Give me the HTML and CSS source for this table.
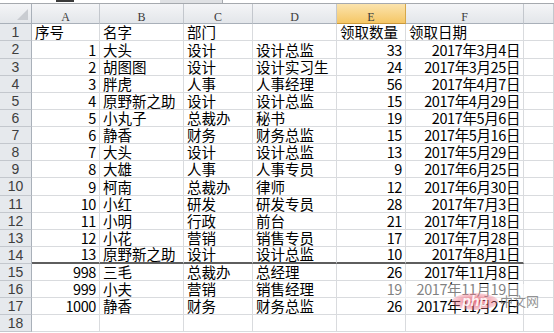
FILE: index.html
```html
<!DOCTYPE html>
<html lang="zh">
<head>
<meta charset="utf-8">
<link rel="stylesheet" href="styles.css">
</head>
<body>
<div class="top"><span class="namebox"></span><span class="split"></span></div>
<div class="sheet">
  <div class="corner"></div><div class="ch">A</div><div class="ch">B</div><div class="ch">C</div><div class="ch">D</div><div class="ch sel">E</div><div class="ch">F</div><div class="ch"></div>

  <div class="rh">1</div><div class="c">序号</div><div class="c">名字</div><div class="c">部门</div><div class="c"></div><div class="c">领取数量</div><div class="c">领取日期</div><div class="c"></div>
  <div class="rh">2</div><div class="c n">1</div><div class="c">大头</div><div class="c">设计</div><div class="c">设计总监</div><div class="c n">33</div><div class="c n">2017年3月4日</div><div class="c"></div>
  <div class="rh">3</div><div class="c n">2</div><div class="c">胡图图</div><div class="c">设计</div><div class="c">设计实习生</div><div class="c n">24</div><div class="c n">2017年3月25日</div><div class="c"></div>
  <div class="rh">4</div><div class="c n">3</div><div class="c">胖虎</div><div class="c">人事</div><div class="c">人事经理</div><div class="c n">56</div><div class="c n">2017年4月7日</div><div class="c"></div>
  <div class="rh">5</div><div class="c n">4</div><div class="c">原野新之助</div><div class="c">设计</div><div class="c">设计总监</div><div class="c n">15</div><div class="c n">2017年4月29日</div><div class="c"></div>
  <div class="rh">6</div><div class="c n">5</div><div class="c">小丸子</div><div class="c">总裁办</div><div class="c">秘书</div><div class="c n">19</div><div class="c n">2017年5月6日</div><div class="c"></div>
  <div class="rh">7</div><div class="c n">6</div><div class="c">静香</div><div class="c">财务</div><div class="c">财务总监</div><div class="c n">15</div><div class="c n">2017年5月16日</div><div class="c"></div>
  <div class="rh">8</div><div class="c n">7</div><div class="c">大头</div><div class="c">设计</div><div class="c">设计总监</div><div class="c n">13</div><div class="c n">2017年5月29日</div><div class="c"></div>
  <div class="rh">9</div><div class="c n">8</div><div class="c">大雄</div><div class="c">人事</div><div class="c">人事专员</div><div class="c n">9</div><div class="c n">2017年6月25日</div><div class="c"></div>
  <div class="rh">10</div><div class="c n">9</div><div class="c">柯南</div><div class="c">总裁办</div><div class="c">律师</div><div class="c n">12</div><div class="c n">2017年6月30日</div><div class="c"></div>
  <div class="rh">11</div><div class="c n">10</div><div class="c">小红</div><div class="c">研发</div><div class="c">研发专员</div><div class="c n">28</div><div class="c n">2017年7月3日</div><div class="c"></div>
  <div class="rh">12</div><div class="c n">11</div><div class="c">小明</div><div class="c">行政</div><div class="c">前台</div><div class="c n">21</div><div class="c n">2017年7月18日</div><div class="c"></div>
  <div class="rh">13</div><div class="c n">12</div><div class="c">小花</div><div class="c">营销</div><div class="c">销售专员</div><div class="c n">17</div><div class="c n">2017年7月28日</div><div class="c"></div>
  <div class="rh">14</div><div class="c n brk">13</div><div class="c brk">原野新之助</div><div class="c brk">设计</div><div class="c brk">设计总监</div><div class="c n brk">10</div><div class="c n brk">2017年8月1日</div><div class="c"></div>
  <div class="rh">15</div><div class="c n">998</div><div class="c">三毛</div><div class="c">总裁办</div><div class="c">总经理</div><div class="c n">26</div><div class="c n">2017年11月8日</div><div class="c"></div>
  <div class="rh">16</div><div class="c n">999</div><div class="c">小夫</div><div class="c">营销</div><div class="c">销售经理</div><div class="c n">19</div><div class="c n">2017年11月19日</div><div class="c"></div>
  <div class="rh">17</div><div class="c n">1000</div><div class="c">静香</div><div class="c">财务</div><div class="c">财务总监</div><div class="c n">26</div><div class="c n">2017年11月27日</div><div class="c"></div>
  <div class="rh">18</div><div class="c"></div><div class="c"></div><div class="c"></div><div class="c"></div><div class="c"></div><div class="c"></div><div class="c"></div>
</div>
<div class="fade"></div>
<div class="wm"><span class="blob">php</span><span class="cn">中文网</span></div>
</body>
</html>
```

FILE: styles.css
```css
html, body {
  margin: 0;
  padding: 0;
  background: #fff;
  width: 554px;
  height: 333px;
  overflow: hidden;
}

.top {
  height: 3px;
  border-bottom: 1px solid #a5a9ae;
  overflow: hidden;
  display: flex;
}

.namebox {
  display: block;
  height: 2px;
  width: 18px;
  margin-left: 56px;
  margin-right: 86px;
  background: #3a3a3a;
}

.split {
  width: 62px;
  background: #dfe1e4;
  border-right: 1px solid #a5a9ae;
}

.sheet {
  display: grid;
  grid-template-columns: 32px 68px 84px 69px 84px 69px 118px 1fr;
  grid-template-rows: 20px 17px 18px repeat(7, 17px) 18px repeat(8, 17px);
  font-family: "Noto Sans CJK SC", "Noto Sans", sans-serif;
  font-size: 14.5px;
  color: #000;
}

.corner, .ch {
  box-sizing: border-box;
  background: linear-gradient(#f4f5f7, #e3e6ea);
  border-right: 1px solid #c3c7cd;
  border-bottom: 1px solid #a9b0b9;
}

.corner {
  position: relative;
  border-right-color: #a9b0b9;
}

.corner::after {
  content: "";
  position: absolute;
  right: 3px;
  bottom: 3px;
  width: 0;
  height: 0;
  border-left: 11px solid transparent;
  border-bottom: 11px solid #c9ccd1;
}

.ch {
  font-family: "Liberation Serif", serif;
  font-size: 12px;
  color: #3b3b3b;
  text-align: center;
  line-height: 12px;
  padding-top: 7px;
}

.ch.sel {
  background: linear-gradient(#fbe3ad, #f5c766);
  border-right-color: #d6a84a;
  border-bottom-color: #c9983a;
}

.rh {
  box-sizing: border-box;
  background: #e6e9ed;
  border-right: 1px solid #a9b0b9;
  border-bottom: 1px solid #c3c7cd;
  font-family: "Liberation Sans", sans-serif;
  font-size: 14px;
  color: #3e3e3e;
  text-align: center;
  line-height: 16px;
}

.c {
  box-sizing: border-box;
  border-right: 1px solid #d9dbde;
  border-bottom: 1px solid #d9dbde;
  line-height: 16px;
  padding: 0 2px 0 3px;
  white-space: nowrap;
  display: flex;
  align-items: flex-end;
}

.c.n {
  justify-content: flex-end;
  padding: 0 3px 0 2px;
  letter-spacing: -0.4px;
}

.c.brk {
  border-bottom: 2px solid #5e5e5e;
}

.fade {
  position: absolute;
  left: 380px;
  top: 284px;
  width: 145px;
  height: 15px;
  background: rgba(255, 255, 255, 0.5);
}

.wm {
  position: absolute;
  left: 452px;
  top: 292px;
  display: flex;
  align-items: center;
  height: 18px;
}

.blob {
  display: block;
  width: 46px;
  height: 17px;
  border-radius: 50%;
  background: radial-gradient(ellipse at center, rgba(226, 70, 90, 0.75), rgba(240, 130, 150, 0.35) 70%, rgba(255, 255, 255, 0) 100%);
  color: rgba(255, 255, 255, 0.9);
  font-family: "Liberation Sans", sans-serif;
  font-style: italic;
  font-weight: bold;
  font-size: 14px;
  line-height: 17px;
  text-align: center;
}

.cn {
  font-family: "Noto Sans CJK SC", sans-serif;
  font-size: 13px;
  color: rgba(110, 110, 110, 0.75);
  margin-left: 2px;
  line-height: 18px;
}
```
